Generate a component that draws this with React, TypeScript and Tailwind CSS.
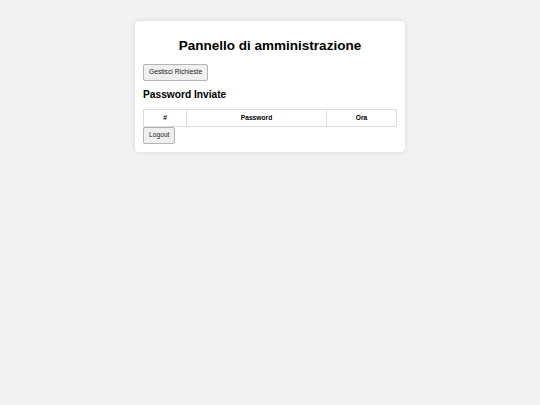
export default function App() {
  return (
    <div className="min-h-[405px] w-full bg-[#f2f2f2] pt-[21px]" style={{ fontFamily: '"Liberation Sans", Arial, sans-serif' }}>
      <div className="mx-auto w-[270px] rounded-[4px] bg-white p-[8px] shadow-[0_0_5px_rgba(0,0,0,0.12)]">
        <h1 className="mb-[10px] mt-[9px] text-center text-[13.5px] font-bold leading-[1.15] text-black">Pannello di amministrazione</h1>
        <button className="block h-[17px] rounded-[2px] border border-[#b3b3b3] bg-[#efefef] px-[5px] text-[6.7px] leading-none text-[#222]">Gestisci Richieste</button>
        <h2 className="mb-[8px] mt-[8.5px] text-[10.2px] font-bold leading-[1.15] text-black">Password Inviate</h2>
        <table className="w-full border-collapse text-[6.67px] text-black">
          <thead>
            <tr>
              <th className="h-[17px] w-[43px] border border-[#dddddd] p-0 font-bold">#</th>
              <th className="h-[17px] w-[140px] border border-[#dddddd] p-0 font-bold">Password</th>
              <th className="h-[17px] border border-[#dddddd] p-0 font-bold">Ora</th>
            </tr>
          </thead>
          <tbody></tbody>
        </table>
        <button className="block h-[17px] rounded-[2px] border border-[#b3b3b3] bg-[#efefef] px-[5px] text-[6.7px] leading-none text-[#222]">Logout</button>
      </div>
    </div>
  );
}
